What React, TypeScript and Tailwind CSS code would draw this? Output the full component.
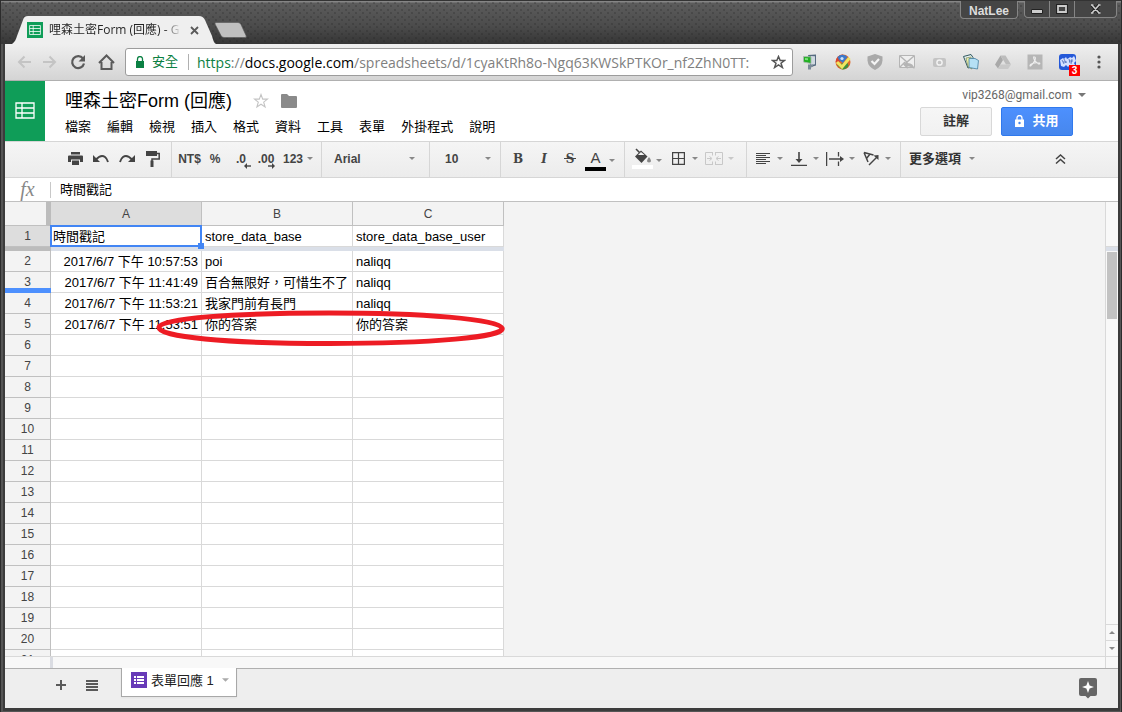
import React from "react";

const MENU = ["檔案", "編輯", "檢視", "插入", "格式", "資料", "工具", "表單", "外掛程式", "說明"];

const ROWS: string[][] = [
  ["2017/6/7 下午 10:57:53", "poi", "naliqq"],
  ["2017/6/7 下午 11:41:49", "百合無限好，可惜生不了", "naliqq"],
  ["2017/6/7 下午 11:53:21", "我家門前有長門", "naliqq"],
  ["2017/6/7 下午 11:53:51", "你的答案", "你的答案"],
  ...Array.from({ length: 16 }, () => ["", "", ""]),
];

function Caret({ className = "" }: { className?: string }) {
  return (
    <svg width="6" height="3" viewBox="0 0 6 3" className={"shrink-0 " + className} fill="currentColor" aria-hidden="true">
      <path d="M0 0h6L3 3z" />
    </svg>
  );
}

function Tool({ label, children, className = "w-[26px]" }: { label: string; children: React.ReactNode; className?: string }) {
  return (
    <button type="button" aria-label={label} className={"flex h-full shrink-0 items-center justify-center " + className}>
      {children}
    </button>
  );
}

function DropTool({ label, children, low = false, muted = false }: { label: string; children: React.ReactNode; low?: boolean; muted?: boolean }) {
  return (
    <button
      type="button"
      aria-label={label}
      className={"flex h-full w-9 shrink-0 items-center gap-[3px] " + (muted ? "text-[#c8c8c8]" : "text-[#444]")}
    >
      <span className="flex w-[22px] justify-center">{children}</span>
      <Caret className={low ? "mt-1 text-[#888]" : muted ? "" : "text-[#888]"} />
    </button>
  );
}

function Group({ children, className = "" }: { children: React.ReactNode; className?: string }) {
  return <div className={"flex shrink-0 items-center border-r border-[#d6d6d6] pb-0.5 " + className}>{children}</div>;
}

function SheetGlyph({ className = "" }: { className?: string }) {
  return (
    <svg width="20" height="17" viewBox="0 0 20 17" fill="none" stroke="#fff" strokeWidth="1.3" className={className} aria-hidden="true">
      <path d="M1 1h18v15H1zM1 6h18M1 11h18M7 1v15" />
    </svg>
  );
}

function TitleBar() {
  return (
    <div className="flex h-11 shrink-0 items-end border-t border-[#333] bg-[radial-gradient(circle_at_2px_2px,#2225_0.6px,transparent_1px),radial-gradient(circle_at_5px_5px,#2225_0.6px,transparent_1px),linear-gradient(#858585_1px,#5c5c5c_2px,#4b4b4b_60%,#353535)] bg-[length:7px_7px,7px_7px,100%_100%] pl-[11px]">
      <div className="relative flex h-7 w-[204px] items-center">
        <svg className="absolute inset-0" width="204" height="28" viewBox="0 0 204 28" aria-hidden="true">
          <path d="M0 28C3 26 4 23 5 20L11 4Q12 0 16 0H187Q191 0 193 4L200 20C201 24 202 27 204 28z" fill="#efefef" />
        </svg>
        <span className="relative ml-[15px] flex h-4 w-4 items-center justify-center bg-[#0f9d58]">
          <SheetGlyph className="h-3 w-3" />
        </span>
        <span className="relative ml-1.5 w-[131px] overflow-hidden whitespace-nowrap bg-[linear-gradient(90deg,#222_115px,#e0e0e0_131px)] bg-clip-text font-['Open_Sans','Noto_Sans_CJK_TC',sans-serif] text-[12px] leading-4 text-transparent">
          哩森土密Form (回應) - G
        </span>
        <button type="button" aria-label="關閉分頁" className="relative ml-2.5">
          <svg width="9" height="9" viewBox="0 0 9 9" stroke="#5a5a5a" strokeWidth="1.8" aria-hidden="true">
            <path d="M1 1l7 7M8 1l-7 7" />
          </svg>
        </button>
      </div>
      <button type="button" aria-label="新增分頁" className="mb-1.5 -ml-1">
        <svg width="36" height="16" viewBox="0 0 36 16" aria-hidden="true">
          <path d="M4 .5H26q2 0 3 2l5 11q1 2-1 2H12q-2 0-3-2L3 2Q2.500.5 4 .5z" fill="#bfbfbf" stroke="#555" strokeWidth=".6" />
        </svg>
      </button>
      <div className="mr-1 ml-auto flex gap-1.5 self-start text-[#ddd]">
        <button type="button" className="h-[18px] w-[58px] rounded-b border border-t-0 border-[#858585] bg-[#454545] text-[12px] font-bold leading-[20px]">
          NatLee
        </button>
        <div className="flex h-[17px] rounded-b border border-t-0 border-[#858585] bg-[#454545]">
          <button type="button" aria-label="最小化" className="flex w-[25px] items-center justify-center border-r border-[#858585] pt-1">
            <svg width="12" height="5" viewBox="0 0 12 5" aria-hidden="true"><path d="M.5 .5h11v4H.5z" fill="#ccc" stroke="#222" /></svg>
          </button>
          <button type="button" aria-label="最大化" className="flex w-[25px] items-center justify-center border-r border-[#858585]">
            <svg width="12" height="10" viewBox="0 0 12 10" fill="none" aria-hidden="true"><path d="M1.500 1.500h9v7h-9z" stroke="#222" strokeWidth="3" /><path d="M2 2h8v6H2z" stroke="#ccc" strokeWidth="1.800" /></svg>
          </button>
          <button type="button" aria-label="關閉" className="flex w-[41px] items-center justify-center">
            <svg width="11" height="10" viewBox="0 0 11 10" aria-hidden="true"><path d="M2 1l7 8M9 1L2 9" stroke="#222" strokeWidth="3.500" /><path d="M2 1l7 8M9 1L2 9M1 1h2.500M8 1h2.500M1 9h2.500M8 9h2.500" stroke="#ccc" strokeWidth="1.600" /></svg>
          </button>
        </div>
      </div>
    </div>
  );
}

const EXTENSIONS: { label: string; art: React.ReactNode }[] = [
  {
    label: "下載器",
    art: (
      <>
        <path d="M5 1l8-.5v11L8 13z" fill="#566b80" /><path d="M8 2l4 .3v8L8 11z" fill="#cfd8e0" />
        <path d="M.5 2.500l7.500.3v6.700L.5 8z" fill="#22b022" stroke="#a9b9b0" strokeWidth=".9" /><path d="M2 4l3 .2v2L2 6z" fill="#7be07b" /><path d="M5 10.500h5v2l-2 1v2H5v-2.500z" fill="#7b8a98" />
      </>
    ),
  },
  {
    label: "書籤檢查",
    art: (
      <>
        <circle cx="8" cy="8" r="7.500" fill="#e06a2c" /><path d="M.7 8A7.500 7.500 0 0 1 8 .5L9 4 3 9z" fill="#d9442f" />
        <path d="M2.500 3q5-4.500 10 0L8 9 4 6z" fill="#3d79c9" /><circle cx="7" cy="4.500" r="1.600" fill="#cfe2f7" />
        <path d="M2 11l5 4.500q5 0 6.500-4L12 8z" fill="#3f8f3f" /><path d="M2 8L7 13l7.500-9" fill="none" stroke="#f0e560" strokeWidth="3" />
      </>
    ),
  },
  { label: "防護", art: (<><path d="M8 0l7.500 2.500v4Q15 13 8 16 1 13 .5 6.500v-4z" fill="#a9a9a9" /><path d="M4.500 7l3 3 4.500-5" fill="none" stroke="#f4f4f4" strokeWidth="2.200" /></>) },
  { label: "郵件", art: (<><path d="M.5 1.500h15v12H.5z" fill="#efefef" stroke="#b5b5b5" /><path d="M1 2l7 6 7-6M1 13l5-5" fill="none" stroke="#b5b5b5" strokeWidth="1.400" /><path d="M4 10.500l4.500-4v2.500q6 0 7 6-3-3-7-2.500v2.500z" fill="#b5b5b5" /></>) },
  { label: "擷取", art: (<><rect x="2" y="4" width="13" height="9" rx="2" fill="#c4c4c4" /><circle cx="8.500" cy="8.500" r="2.600" fill="none" stroke="#f2f2f2" strokeWidth="1.500" /></>) },
  {
    label: "筆記",
    art: (
      <>
        <path d="M.5 2.500L8 .5l2 3v9L5 14z" fill="#e8f3f2" stroke="#2f565d" /><path d="M3 4l5-1 1 12-4-2z" fill="#eef2a6" stroke="#67724f" strokeWidth=".6" />
        <path d="M6 4.500h6l3.500 2-1 8.500L6 13.500z" fill="#b5e0f5" stroke="#457f9f" strokeWidth=".8" />
      </>
    ),
  },
  { label: "雲端硬碟", art: (<><path d="M5.500 1.500h5L16 10.500h-5z" fill="#bcbcbc" /><path d="M5.500 1.500L8 6l-5 8.500L0 10.500z" fill="#a9a9a9" /><path d="M5.500 10.500H16l-3 4.500H3z" fill="#c9c9c9" /></>) },
  { label: "PDF", art: (<><path d="M.5 .5h15v15H.5z" fill="#b6b6b6" /><path d="M7.500 3q1.500 0 .5 3t-4.500 6q-1 0 0-1.500 3-2.500 9-1.500 1 1-1 1Q8 8 7 5t.5-2z" fill="none" stroke="#eee" strokeWidth="1.100" /></>) },
];

function AddressBar() {
  return (
    <div className="flex h-[37px] shrink-0 items-center border-b border-[#b0b0b0] bg-[linear-gradient(#efefef,#d4d4d4)] pl-3">
      <div className="flex w-[108px] shrink-0 items-center justify-between pr-2.5 pl-0 text-[#5a5a5a]">
        <button type="button" aria-label="上一頁"><svg width="14" height="14" viewBox="0 0 14 14" fill="none" stroke="#c4c4c4" strokeWidth="2" aria-hidden="true"><path d="M14 7H2M7.500 1.500L2 7l5.500 5.500" /></svg></button>
        <button type="button" aria-label="下一頁"><svg width="14" height="14" viewBox="0 0 14 14" fill="none" stroke="#c4c4c4" strokeWidth="2" aria-hidden="true"><path d="M0 7h12M6.500 1.500L12 7l-5.500 5.500" /></svg></button>
        <button type="button" aria-label="重新載入">
          <svg width="16" height="16" viewBox="0 0 16 16" aria-hidden="true"><path d="M13 4.500A6 6 0 1 0 14 9.500" fill="none" stroke="currentColor" strokeWidth="2.200" /><path d="M15 1v6.500H8.500z" fill="currentColor" /></svg>
        </button>
        <button type="button" aria-label="首頁">
          <svg width="17" height="16" viewBox="0 0 17 16" fill="none" stroke="currentColor" strokeWidth="2" aria-hidden="true"><path d="M1 9L8.500 1.500 16 9M3.500 8v7h10V8" /></svg>
        </button>
      </div>
      <div className="flex h-7 min-w-0 flex-1 items-center rounded-[3px] border border-[#9c9c9c] bg-white pr-1.5 pl-2.5 font-['Open_Sans','Noto_Sans_CJK_TC',sans-serif] text-[14px]">
        <svg width="8" height="12" viewBox="0 0 8 12" className="shrink-0" aria-hidden="true"><path d="M0 5h8v7H0z" fill="#0b8043" /><path d="M1.500 5.500V3a2.500 2.500 0 0 1 5 0v2.500" fill="none" stroke="#0b8043" strokeWidth="1.300" /></svg>
        <span className="ml-2 shrink-0 text-[13px] text-[#0b8043]">安全</span>
        <span className="mr-2 ml-2.5 h-4 w-px shrink-0 bg-[#b0b0b0]" />
        <a href="https://docs.google.com/spreadsheets/" className="min-w-0 flex-1 overflow-hidden whitespace-nowrap text-[#808080]">
          <span className="text-[#0b8043]">https</span>://<span className="text-black">docs.google.com</span>/spreadsheets/d/1cyaKtRh8o-Ngq63KWSkPTKOr_nf2ZhN0TT:
        </a>
        <button type="button" aria-label="加入書籤" className="ml-2">
          <svg width="15" height="14" viewBox="0 0 15 14" fill="none" stroke="#555" strokeWidth="1.500" aria-hidden="true"><path d="M7.500 1.500l1.700 4h4.300l-3.500 2.700 1.400 4.300-3.900-2.600-3.900 2.600L5 8.200 1.500 5.500h4.300z" /></svg>
        </button>
      </div>
      <div className="ml-2 flex shrink-0 items-center">
        {EXTENSIONS.map((e) => (
          <button type="button" key={e.label} aria-label={e.label} className="flex w-8 justify-start pl-0.5">
            <svg width="16" height="16" viewBox="0 0 16 16" aria-hidden="true">{e.art}</svg>
          </button>
        ))}
        <button type="button" aria-label="通知" className="relative w-8 pl-0.5">
          <svg width="17" height="16" viewBox="0 0 17 16" aria-hidden="true"><rect width="17" height="16" rx="3" fill="#2458d8" /><path d="M1 6l3-2 1 1 2-2 1 2 2-1 1-1 2 1 2-2 1 2 1 3-2 2 1 2-3 1-2-1-2 2-2-2-2 2-3-1z" fill="#d3e0ff" /><path d="M3 6l2 4M5 5l2 4M10 5l1 4M13 5l-1 5M4 8h4M10 7h4" stroke="#4a69b8" strokeWidth=".8" /></svg>
          <span className="absolute top-[11px] left-3 h-[11px] w-[11px] bg-[#f00] text-center text-[10px] leading-[11px] font-bold text-white">3</span>
        </button>
        <button type="button" aria-label="選單" className="flex w-[29px] justify-start pl-2">
          <svg width="4" height="14" viewBox="0 0 4 14" fill="#555" aria-hidden="true"><circle cx="2" cy="2" r="1.600" /><circle cx="2" cy="7" r="1.600" /><circle cx="2" cy="12" r="1.600" /></svg>
        </button>
      </div>
    </div>
  );
}

function DocHeader() {
  return (
    <header className="flex h-[60px] shrink-0 bg-white">
      <a href="#home" aria-label="試算表首頁" className="flex w-10 shrink-0 items-center justify-center bg-[#0f9d58] pb-0.5">
        <SheetGlyph />
      </a>
      <div className="min-w-0 flex-1 pt-2 pl-5">
        <div className="flex h-6 items-center">
          <h1 className="text-[18px] leading-6 text-black">哩森土密Form (回應)</h1>
          <button type="button" aria-label="加星號" className="ml-[21px]">
            <svg width="16" height="16" viewBox="0 0 16 16" fill="none" stroke="#c4c4c4" strokeWidth="1.100" aria-hidden="true"><path d="M8 1.500l1.700 4.600h4.800l-3.800 3 1.400 4.900L8 11.200 3.900 14l1.400-4.900-3.800-3h4.800z" /></svg>
          </button>
          <button type="button" aria-label="資料夾" className="ml-3">
            <svg width="16" height="14" viewBox="0 0 16 14" fill="#8a8a8a" aria-hidden="true"><path d="M0 1q0-1 1-1h5l2 2h7q1 0 1 1v10q0 1-1 1H1q-1 0-1-1z" /></svg>
          </button>
        </div>
        <nav className="mt-1 flex gap-4 text-[13px] leading-5 text-black">
          {MENU.map((m) => (
            <button type="button" key={m} className="shrink-0">{m}</button>
          ))}
        </nav>
      </div>
      <div className="flex shrink-0 flex-col items-end pt-1.5">
        <button type="button" className="mr-8 flex items-center gap-1.5 font-[Roboto,sans-serif] text-[12px] leading-4 text-[#666]">
          vip3268@gmail.com
          <svg width="8" height="4" viewBox="0 0 8 4" fill="#777" aria-hidden="true"><path d="M0 0h8L4 4z" /></svg>
        </button>
        <div className="mt-1 mr-[45px] flex gap-[9px] text-[13px] font-bold">
          <button type="button" className="h-[29px] w-[72px] rounded-[2px] border border-[#d8d8d8] bg-[linear-gradient(#f6f6f6,#f1f1f1)] pb-0.5 text-[#333]">註解</button>
          <button type="button" className="flex h-[29px] w-[72px] items-center justify-center gap-2 rounded-[2px] border border-[#3079ed] bg-[linear-gradient(#4d90fe,#4787ed)] pb-0.5 text-white">
            <svg width="9" height="12" viewBox="0 0 9 12" aria-hidden="true"><path d="M0 4.500h9V12H0z" fill="#fff" /><path d="M2 5V3a2.500 2.500 0 0 1 5 0v2" fill="none" stroke="#fff" strokeWidth="1.300" /><circle cx="4.500" cy="8" r="1.200" fill="#4787ed" /></svg>
            共用
          </button>
        </div>
      </div>
    </header>
  );
}

function Toolbar() {
  return (
    <div className="flex h-[37px] shrink-0 border-y border-[#d6d6d6] bg-[linear-gradient(#f5f5f5,#ececec)] text-[12px] font-bold text-[#444]">
      <Group className="w-[167px] pl-[57px]">
        <Tool label="列印"><svg width="15" height="13" viewBox="0 0 15 13" fill="currentColor" aria-hidden="true"><path d="M3 0h9v2.500H3zM1 3.500h13q1 0 1 1V10h-3V7.500H3V10H0V4.500q0-1 1-1zM4 8.500h7V13H4z" /></svg></Tool>
        <Tool label="復原"><svg width="16" height="9" viewBox="0 0 16 9" aria-hidden="true"><path d="M0 1v7h7z" fill="currentColor" /><path d="M3 5.500Q8 0 12 3q2 1.500 3 5" fill="none" stroke="currentColor" strokeWidth="1.900" /></svg></Tool>
        <Tool label="取消復原"><svg width="16" height="9" viewBox="0 0 16 9" aria-hidden="true"><path d="M16 1v7H9z" fill="currentColor" /><path d="M13 5.500Q8 0 4 3q-2 1.500-3 5" fill="none" stroke="currentColor" strokeWidth="1.900" /></svg></Tool>
        <Tool label="繪製格式"><svg width="14" height="16" viewBox="0 0 14 16" aria-hidden="true"><path d="M0 0h11v5H0z" fill="currentColor" /><path d="M11 2.500h2.200V8H6v2" fill="none" stroke="currentColor" strokeWidth="1.500" /><path d="M4.500 9.500h3V16h-3z" fill="currentColor" /></svg></Tool>
      </Group>
      <Group className="w-[150px]">
        <Tool label="貨幣格式" className="w-[35px]">NT$</Tool>
        <Tool label="百分比格式" className="w-4">%</Tool>
        <Tool label="減少小數位數" className="ml-1 w-7">
          <span className="relative">.0<svg className="absolute top-[13px] left-2" width="7" height="6" viewBox="0 0 7 6" aria-hidden="true"><path d="M7 3H2" stroke="currentColor" strokeWidth="1.400" /><path d="M0 3l3-3v6z" fill="currentColor" /></svg></span>
        </Tool>
        <Tool label="增加小數位數" className="w-[22px]">
          <span className="relative">.00<svg className="absolute top-[13px] left-2.5" width="7" height="6" viewBox="0 0 7 6" aria-hidden="true"><path d="M0 3h5" stroke="currentColor" strokeWidth="1.400" /><path d="M7 3L4 0v6z" fill="currentColor" /></svg></span>
        </Tool>
        <Tool label="更多格式" className="ml-1.5 gap-1">123<Caret className="text-[#888]" /></Tool>
      </Group>
      <Group className="w-[108px] pr-3.5 pl-3">
        <select aria-label="字型" defaultValue="Arial" className="h-full min-w-0 flex-1 appearance-none bg-transparent font-bold"><option>Arial</option></select>
        <Caret className="text-[#888]" />
      </Group>
      <Group className="w-[71px] pr-[9px] pl-[15px]">
        <select aria-label="字型大小" defaultValue="10" className="h-full min-w-0 flex-1 appearance-none bg-transparent font-bold"><option>10</option></select>
        <Caret className="text-[#888]" />
      </Group>
      <Group className="w-[124px] pl-1">
        <Tool label="粗體"><span className="font-['DejaVu_Serif',serif] text-[12px]">B</span></Tool>
        <Tool label="斜體"><span className="font-['DejaVu_Serif',serif] text-[12px] italic">I</span></Tool>
        <Tool label="刪除線"><span className="relative font-['DejaVu_Serif',serif] text-[12px]">S<span className="absolute top-2 -left-0.5 h-px w-3 bg-[#444]" /></span></Tool>
        <Tool label="文字顏色" className="w-[35px] justify-start gap-[3px]">
          <span className="mt-1 ml-0.5 flex w-[21px] flex-col items-center text-[15px] leading-4 font-normal">A<span className="mt-px h-1 w-full bg-black" /></span>
          <Caret className="mt-1 text-[#888]" />
        </Tool>
      </Group>
      <Group className="w-[122px] pl-1.5">
        <DropTool label="填滿顏色" low>
          <svg width="21" height="21" viewBox="0 0 21 21" aria-hidden="true"><path d="M4 1l3.500 3.500" stroke="currentColor" strokeWidth="1.600" /><path d="M3 8.500L9 2.500l6.500 6L9.500 15z" fill="currentColor" /><path d="M6 7l3-3 3.500 3z" fill="#f3f3f3" /><path d="M17 9q4 5 0 5.500-4-.5 0-5.500z" fill="#888" /><path d="M0 17h21v4H0z" fill="#fff" /></svg>
        </DropTool>
        <DropTool label="框線"><svg width="13" height="13" viewBox="0 0 13 13" fill="none" stroke="currentColor" strokeWidth="1.200" aria-hidden="true"><path d="M.6 .6h11.800v11.800H.6zM6.500 0v13M0 6.500h13" /></svg></DropTool>
        <DropTool label="合併儲存格" muted><svg width="18" height="13" viewBox="0 0 18 13" fill="none" stroke="currentColor" aria-hidden="true"><path d="M8 .5H.5v3M.5 9.500v3H8M10 .5h7.500v3M17.500 9.500v3H10M7.500 .5v3M7.500 9.500v3M10.500 .5v3M10.500 9.500v3M.5 3v7M17.500 3v7M2 6.500h4M16 6.500h-4M4.500 4.500l2.500 2-2.500 2M13.500 4.500l-2.500 2 2.500 2" /></svg></DropTool>
      </Group>
      <Group className="w-[154px] pl-[5px]">
        <DropTool label="水平對齊"><svg width="14" height="11" viewBox="0 0 14 11" stroke="currentColor" aria-hidden="true"><path d="M0 .5h14M0 2.500h10M0 4.500h14M0 6.500h10M0 8.500h14M0 10.500h10" /></svg></DropTool>
        <DropTool label="垂直對齊"><svg width="16" height="14" viewBox="0 0 16 14" aria-hidden="true"><path d="M8 0v9" stroke="currentColor" strokeWidth="1.600" /><path d="M4.500 7h7L8 11zM0 12.800h16v1.200H0z" fill="currentColor" /></svg></DropTool>
        <DropTool label="文字換行"><svg width="18" height="14" viewBox="0 0 18 14" aria-hidden="true"><path d="M.6 0v14M12.500 0v4.500M12.500 9.500V14M3 7h12" fill="none" stroke="currentColor" strokeWidth="1.300" /><path d="M14 4l4 3-4 3z" fill="currentColor" /></svg></DropTool>
        <DropTool label="文字旋轉"><svg width="16" height="15" viewBox="0 0 16 15" fill="none" stroke="currentColor" strokeWidth="1.500" aria-hidden="true"><path d="M6 14L14 6" /><path d="M15.500 4v5l-5-4.500z" fill="currentColor" stroke="none" /><path d="M1 1.500L5 11M1 1.500l9.500 2.500M3.500 7.500L7 3" /></svg></DropTool>
      </Group>
      <button type="button" className="ml-2 flex shrink-0 items-center gap-2 pb-0.5 text-[13px] text-[#333]">更多選項<Caret className="text-[#888]" /></button>
      <Tool label="隱藏選單" className="mr-11 ml-auto w-[27px] pb-0.5">
        <svg width="11" height="10" viewBox="0 0 11 10" fill="none" stroke="currentColor" strokeWidth="1.500" aria-hidden="true"><path d="M1 5l4.500-4L10 5M1 9.500l4.500-4 4.500 4" /></svg>
      </Tool>
    </div>
  );
}

function FormulaBar() {
  return (
    <div className="flex h-6 shrink-0 items-center border-b border-[#c0c0c0] bg-white">
      <label htmlFor="formula" className="w-[45px] shrink-0 pb-0.5 text-center font-['Liberation_Serif',serif] text-[20px] leading-5 text-[#888] italic">fx</label>
      <span className="h-4 w-px shrink-0 bg-[#c8c8c8]" />
      <input id="formula" defaultValue="時間戳記" className="h-full min-w-0 flex-1 bg-transparent pb-0.5 pl-[9px] text-[13px] text-black outline-none" />
    </div>
  );
}

const LINE = "border-r border-b border-[#c0c0c0] p-0 text-center text-[12px] font-normal text-[#444]";
const CELL = "overflow-hidden border-r border-b border-[#d9d9d9] bg-white px-[3px] pt-0.5 pb-0 leading-[18px] whitespace-nowrap";

function Grid() {
  return (
    <div className="relative min-w-0 flex-1 overflow-hidden bg-[#f3f3f3]">
      <table className="w-[499px] table-fixed border-separate border-spacing-0 text-[13px] leading-5 text-black">
        <colgroup>
          <col className="w-[46px]" />
          <col className="w-[151px]" />
          <col className="w-[151px]" />
          <col className="w-[151px]" />
        </colgroup>
        <thead>
          <tr>
            <th className="border-r-[5px] border-b border-r-[#bcbcbc] border-b-[#c0c0c0] bg-[#f3f3f3] p-0" />
            {["A", "B", "C"].map((c) => (
              <th key={c} scope="col" className={LINE + " h-6 " + (c === "A" ? "bg-[#dddddd]" : "bg-[#f3f3f3]")}>{c}</th>
            ))}
          </tr>
        </thead>
        <tbody>
          <tr>
            <th scope="row" className={LINE + " bg-[#dddddd]"}>1</th>
            <td className="relative border-r border-b border-[#d9d9d9] bg-white px-[2px] pt-0.5 pb-0 leading-[18px] whitespace-nowrap">
              時間戳記
              <span className="absolute -inset-x-px -top-px -bottom-px border-2 border-[#4285f4]" />
              <span className="absolute -right-[3px] -bottom-[3px] z-10 h-1.5 w-1.5 bg-[#4285f4]" />
            </td>
            <td className={CELL}>store_data_base</td>
            <td className={CELL}>store_data_base_user</td>
          </tr>
          <tr aria-hidden="true">
            <td className="h-1 bg-[#bcbcbc] p-0" />
            <td colSpan={3} className="h-1 bg-[#dadfe8] p-0" />
          </tr>
          {ROWS.map((row, i) => (
            <tr key={i}>
              <th scope="row" className={LINE + " relative bg-[#f3f3f3]"}>
                {i + 2}
                {i === 1 && <span className="absolute inset-x-0 -right-px -bottom-px h-[5px] bg-[#4d90fe]" />}
              </th>
              {row.map((v, j) => (
                <td key={j} className={CELL + (j === 0 ? " text-right" : "")}>{v}</td>
              ))}
            </tr>
          ))}
        </tbody>
      </table>
      <svg className="absolute top-[107px] left-[150px]" width="352" height="38" viewBox="0 0 352 38" fill="none" aria-hidden="true">
        <path d="M4 18C7 9 80 4 174 4s169 6 173 15-71 15.500-173 15.500S2 28 4 18z" stroke="#ed1c24" strokeWidth="5" />
      </svg>
    </div>
  );
}

function SheetArea() {
  return (
    <div className="flex min-h-0 flex-1">
      <Grid />
      <div className="flex w-[13px] shrink-0 flex-col border-l border-[#d9d9d9] bg-[#f8f8f8] text-[#888]">
        <div className="mt-11 h-[5px] border-t border-[#d9d9d9] bg-[#dadfe8]" />
        <div className="mx-px mt-px h-[67px] bg-[#c2c2c2]" />
        <button type="button" aria-label="向上捲動" className="mt-auto flex h-4 items-center justify-center border-t border-[#d9d9d9]"><Caret className="rotate-180" /></button>
        <button type="button" aria-label="向下捲動" className="flex h-4 items-center justify-center border-t border-[#d9d9d9]"><Caret /></button>
      </div>
    </div>
  );
}

function SheetTabs() {
  return (
    <>
      <div className="flex h-3 shrink-0 border-t border-[#d9d9d9] bg-[#f8f8f8]">
        <span className="ml-[45px] w-[3px] bg-[#dadce2]" />
        <span className="mr-3 ml-auto w-px bg-[#d9d9d9]" />
      </div>
      <footer className="flex h-10 shrink-0 items-start border-t border-[#b0b0b0] bg-[#eeeeee] pl-[51px]">
        <button type="button" aria-label="新增工作表" className="mt-[11px] mr-5"><svg width="10" height="10" viewBox="0 0 10 10" stroke="#5a5a5a" strokeWidth="2" aria-hidden="true"><path d="M5 0v10M0 5h10" /></svg></button>
        <button type="button" aria-label="所有工作表" className="mt-[11px] mr-[23px]"><svg width="12" height="11" viewBox="0 0 12 11" stroke="#5a5a5a" strokeWidth="1.800" aria-hidden="true"><path d="M0 1h12M0 4h12M0 7h12M0 10h12" /></svg></button>
        <button type="button" className="-mt-px flex h-[29px] w-[116px] items-center border border-t-0 border-[#a8a8a8] bg-white pb-1 pl-[9px] text-[13px] text-[#222] shadow-xs">
          <svg width="16" height="16" viewBox="0 0 16 16" aria-hidden="true"><path d="M0 0h16v16H0z" fill="#673ab7" /><path d="M3 4h2v2H3zM6 4h7v2H6zM3 7h2v2H3zM6 7h7v2H6zM3 10h2v2H3zM6 10h7v2H6z" fill="#fff" /></svg>
          <span className="ml-1 pt-0.5 whitespace-nowrap">表單回應 1</span>
          <svg width="7" height="4" viewBox="0 0 8 4" fill="#aaa" className="ml-2" aria-hidden="true"><path d="M0 0h8L4 4z" /></svg>
        </button>
        <button type="button" aria-label="探索" className="mt-[9px] mr-[21px] ml-auto">
          <svg width="18" height="21" viewBox="0 0 18 21" aria-hidden="true"><path d="M2 0h14q2 0 2 2v14q0 2-2 2h-4.500L9 20.500 6.500 18H2q-2 0-2-2V2q0-2 2-2z" fill="#666" /><path d="M9 3l1.600 4.400L15 9l-4.400 1.600L9 15l-1.600-4.400L3 9l4.400-1.600z" fill="#fff" /></svg>
        </button>
      </footer>
    </>
  );
}

export default function App() {
  return (
    <div className="flex h-screen flex-col overflow-hidden border-x border-[#2c2c2c] bg-[#555] font-['Liberation_Sans','Noto_Sans_CJK_TC',sans-serif]">
      <TitleBar />
      <div className="mr-px mb-px ml-0.5 flex min-h-0 flex-1 flex-col border-r-2 border-b-[3px] border-l-2 border-[#3c3c3c] bg-white">
        <AddressBar />
        <DocHeader />
        <Toolbar />
        <FormulaBar />
        <SheetArea />
        <SheetTabs />
      </div>
    </div>
  );
}
